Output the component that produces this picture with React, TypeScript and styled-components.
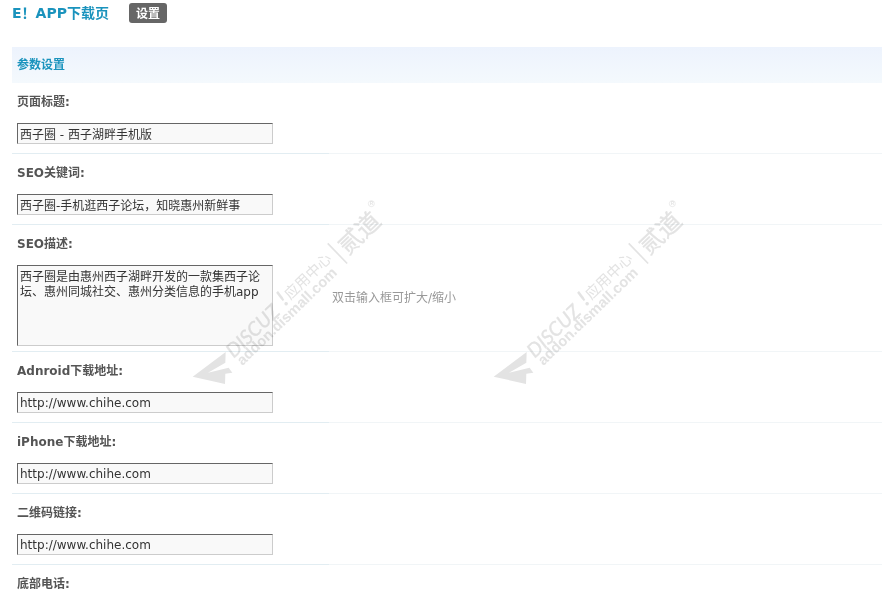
import React from 'react';
import styled, { createGlobalStyle, css } from 'styled-components';

const GlobalStyle = createGlobalStyle`
  *, *::before, *::after { box-sizing: border-box; }
  body {
    margin: 0;
    background: #fff;
    color: #555;
    font: 12px/18px Verdana, "DejaVu Sans", "Noto Sans CJK SC", sans-serif;
  }
`;

const Page = styled.main`
  position: relative;
  height: 100vh;
  overflow: hidden;
  padding-left: 12px;
`;

const Header = styled.header`
  display: flex;
  align-items: center;
  gap: 20px;
  height: 26px;
  margin-bottom: 21px;
`;

const Title = styled.h1`
  margin: 0;
  color: #1a93bd;
  font-size: 14px;
  line-height: 20px;
`;

const TabButton = styled.button`
  height: 20px;
  padding: 0 7px;
  border: 0;
  border-radius: 3px;
  background: #666;
  color: #fff;
  font: bold 12px/20px "Noto Sans CJK SC", sans-serif;
  cursor: pointer;
`;

const SectionTitle = styled.h2`
  margin: 0;
  padding: 1px 5px 0;
  background: linear-gradient(#edf3fd, #f4f9fd);
  color: #1a93bd;
  font-size: 12px;
  line-height: 35px;
`;

const Row = styled.div`
  display: grid;
  grid-template-columns: 317px 1fr;
`;

const FieldCell = styled.div<{ $tight?: boolean }>`
  padding: 0 5px ${(p) => (p.$tight ? 5 : 9)}px;
  border-bottom: 1px solid #e2edf2;
`;

const HintCell = styled.div`
  padding: 64px 3px 0;
  border-bottom: 1px solid #f1f5f7;
  color: #999;
`;

const Label = styled.label`
  display: block;
  height: 40px;
  padding-top: 10px;
  font-weight: bold;
`;

const controlStyle = css`
  display: block;
  width: 256px;
  border: 1px solid;
  border-color: #666 #ccc #ccc #666;
  border-radius: 0;
  outline: 0;
  background: #f9f9f9;
  color: #333;
  font-family: inherit;
  font-size: 12px;
`;

const TextInput = styled.input`
  ${controlStyle}
  height: 21px;
  padding: 2px;
  line-height: 15px;
`;

const TextBox = styled.textarea`
  ${controlStyle}
  height: 81px;
  padding: 4px 2px;
  line-height: 15px;
  resize: none;
  overflow: hidden;
`;

const Mark = styled.svg<{ $left: number }>`
  position: absolute;
  top: 190px;
  left: ${(p) => p.$left}px;
  width: 220px;
  height: 210px;
  pointer-events: none;
  mix-blend-mode: multiply;
  fill: #e3e3e3;
`;

function Watermark({ left }: { left: number }) {
  return (
    <Mark $left={left} viewBox="0 0 660 630" aria-hidden="true">
      <path d="M38 560 L137 486 L136 518 L84 548 L146 533 L157 548 L136 551 L135 582 Z" />
      <g transform="translate(166 500) rotate(-44)">
        <text x="-8" y="1" fontFamily="Lato, sans-serif" fontStyle="italic" fontSize="59" stroke="#e3e3e3" strokeWidth="1">DISCUZ</text>
        <text x="213" y="-4" fontFamily="Lato, sans-serif" fontStyle="italic" fontWeight="bold" fontSize="68">!</text>
        <text x="236" y="-7" fontFamily="Noto Sans CJK SC, sans-serif" fontSize="44">应用中心</text>
        <text x="-4" y="35" fontFamily="Liberation Sans, sans-serif" fontWeight="bold" fontSize="44">addon.dismall.com</text>
        <rect x="433" y="-52" width="5" height="84" />
        <text x="453" y="17" fontFamily="Noto Sans CJK SC, sans-serif" fontSize="72" stroke="#e3e3e3" strokeWidth="1">贰道</text>
      </g>
      <circle cx="574" cy="41" r="9" fill="none" stroke="#e3e3e3" strokeWidth="2" />
      <text x="569" y="46" fontFamily="Liberation Sans, sans-serif" fontWeight="bold" fontSize="14">R</text>
    </Mark>
  );
}

interface Field {
  id: string;
  label: string;
  value: string;
  multiline?: boolean;
  hint?: string;
}

const fields: Field[] = [
  { id: 'title', label: '页面标题:', value: '西子圈 - 西子湖畔手机版' },
  { id: 'keywords', label: 'SEO关键词:', value: '西子圈-手机逛西子论坛，知晓惠州新鲜事' },
  {
    id: 'description',
    label: 'SEO描述:',
    value: '西子圈是由惠州西子湖畔开发的一款集西子论坛、惠州同城社交、惠州分类信息的手机app',
    multiline: true,
    hint: '双击输入框可扩大/缩小',
  },
  { id: 'android', label: 'Adnroid下载地址:', value: 'http://www.chihe.com' },
  { id: 'iphone', label: 'iPhone下载地址:', value: 'http://www.chihe.com' },
  { id: 'qrcode', label: '二维码链接:', value: 'http://www.chihe.com' },
  { id: 'phone', label: '底部电话:', value: '' },
];

export default function App() {
  return (
    <>
      <GlobalStyle />
      <Page lang="zh-CN">
        <Header>
          <Title>E！APP下载页</Title>
          <TabButton type="button">设置</TabButton>
        </Header>
        <form>
          <SectionTitle>参数设置</SectionTitle>
          {fields.map((f) => (
            <Row key={f.id}>
              <FieldCell $tight={f.multiline}>
                <Label htmlFor={f.id}>{f.label}</Label>
                {f.multiline ? (
                  <TextBox id={f.id} defaultValue={f.value} spellCheck={false} />
                ) : (
                  <TextInput id={f.id} type="text" defaultValue={f.value} />
                )}
              </FieldCell>
              <HintCell>{f.hint}</HintCell>
            </Row>
          ))}
        </form>
        <Watermark left={180} />
        <Watermark left={481} />
      </Page>
    </>
  );
}
